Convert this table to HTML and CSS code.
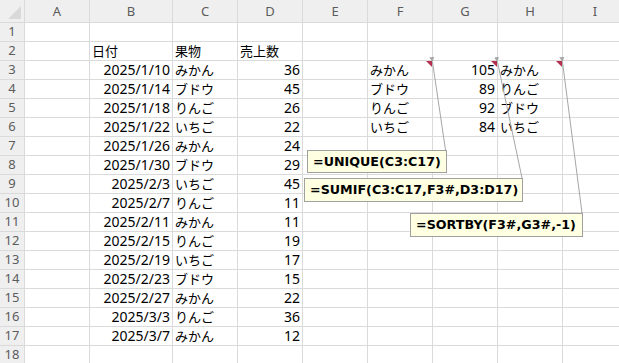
FILE: index.html
```html
<!DOCTYPE html>
<html lang="ja">
<head>
  <meta charset="UTF-8" />
  <meta name="viewport" content="width=device-width, initial-scale=1" />
  <title>果物の売上集計</title>
  <link rel="stylesheet" href="styles.css">
</head>
<body>
  <div class="book">
    <div class="sheet" id="sheet">
      <!-- Cells are built by the script below -->
    </div>

    <!-- Leader lines from the note markers to their notes -->
    <svg class="leaders" width="619" height="363">
      <defs>
        <marker id="tip" markerWidth="5" markerHeight="5" refX="0" refY="2.5" orient="auto-start-reverse" markerUnits="userSpaceOnUse">
          <path d="M0,2.5 L5,0 L5,5 z" fill="#a6a6a6" />
        </marker>
      </defs>
      <line x1="432.5" y1="62" x2="445.5" y2="150" marker-start="url(#tip)" />
      <line x1="497.5" y1="62" x2="522" y2="178" marker-start="url(#tip)" />
      <line x1="562.5" y1="62" x2="582" y2="213" marker-start="url(#tip)" />
    </svg>

    <div class="note note-unique">=UNIQUE(C3:C17)</div>
    <div class="note note-sumif">=SUMIF(C3:C17,F3#,D3:D17)</div>
    <div class="note note-sortby">=SORTBY(F3#,G3#,-1)</div>
  </div>

  <script>
    const cols = ['A', 'B', 'C', 'D', 'E', 'F', 'G', 'H', 'I'];

    const sales = [
      ['2025/1/10', 'みかん', 36],
      ['2025/1/14', 'ブドウ', 45],
      ['2025/1/18', 'りんご', 26],
      ['2025/1/22', 'いちご', 22],
      ['2025/1/26', 'みかん', 24],
      ['2025/1/30', 'ブドウ', 29],
      ['2025/2/3', 'いちご', 45],
      ['2025/2/7', 'りんご', 11],
      ['2025/2/11', 'みかん', 11],
      ['2025/2/15', 'りんご', 19],
      ['2025/2/19', 'いちご', 17],
      ['2025/2/23', 'ブドウ', 15],
      ['2025/2/27', 'みかん', 22],
      ['2025/3/3', 'りんご', 36],
      ['2025/3/7', 'みかん', 12]
    ];

    // Same results as the three spill formulas
    const fruits = [...new Set(sales.map(r => r[1]))];
    const totals = fruits.map(f => sales.filter(r => r[1] === f).reduce((sum, r) => sum + r[2], 0));
    const ranked = fruits.map((f, i) => [f, totals[i]]).sort((a, b) => b[1] - a[1]).map(p => p[0]);

    const cells = { B2: '日付', C2: '果物', D2: '売上数' };
    sales.forEach((r, i) => {
      const row = i + 3;
      cells['B' + row] = r[0];
      cells['C' + row] = r[1];
      cells['D' + row] = r[2];
    });
    fruits.forEach((f, i) => {
      cells['F' + (i + 3)] = f;
      cells['G' + (i + 3)] = totals[i];
      cells['H' + (i + 3)] = ranked[i];
    });

    const notes = ['F3', 'G3', 'H3'];
    const sheet = document.getElementById('sheet');

    function add(cls, text) {
      const div = document.createElement('div');
      div.className = cls;
      if (text !== undefined) div.textContent = text;
      sheet.appendChild(div);
    }

    add('corner');
    cols.forEach(c => add('col-head', c));

    for (let r = 1; r <= 18; r++) {
      add('row-head', r);
      cols.forEach(c => {
        const ref = c + r;
        const value = cells[ref];
        let cls = 'cell';
        if (typeof value === 'number' || /^\d/.test(value)) cls += ' num';
        else if (value) cls += ' ja';
        if (notes.includes(ref)) cls += ' has-note';
        add(cls, value);
      });
    }
  </script>
</body>
</html>
```

FILE: styles.css
```css
body { margin: 0; overflow: hidden; background: #fff; font-family: "Noto Sans", "Noto Sans CJK JP", sans-serif; }
.book { position: relative; width: 619px; height: 363px; overflow: hidden; }

.sheet { display: grid; grid-template-columns: 25px 65px 83px repeat(7, 65px); grid-template-rows: 23px; grid-auto-rows: 19px; }
.sheet > div { box-sizing: border-box; border-right: 1px solid #dadada; border-bottom: 1px solid #dadada; white-space: nowrap; overflow: hidden; }

.corner, .col-head, .row-head { background: #efefef; color: #5c5c5c; font-size: 13px; text-align: center; }
.corner { position: relative; border-right-color: #d4d4d4; border-bottom-color: #a9a9a9; }
.corner::after { content: ''; position: absolute; right: 3px; bottom: 3px; border-left: 13px solid transparent; border-bottom: 13px solid #d9d9d9; }
.col-head { line-height: 22px; border-right-color: #d4d4d4; border-bottom-color: #a9a9a9; }
.row-head { line-height: 16px; border-right-color: #a9a9a9; border-bottom-color: #d4d4d4; }

.cell { font-size: 14px; line-height: 18px; padding: 0 2px; color: #000; }
.cell.num { text-align: right; }
.cell.ja { font-family: "Noto Sans CJK JP", sans-serif; font-size: 13px; }
.cell.has-note { position: relative; }
.cell.has-note::after { content: ''; position: absolute; top: 0; right: 0; border-top: 6px solid #b4304e; border-left: 6px solid transparent; }

.leaders { position: absolute; top: 0; left: 0; pointer-events: none; }
.leaders line { stroke: #a6a6a6; stroke-width: 1; }

.note { position: absolute; box-sizing: border-box; background: #ffffe1; border: 1px solid #a0a0a0; color: #000; font: bold 12.7px "DejaVu Sans", sans-serif; line-height: 21px; padding: 0 5px; white-space: nowrap; }
.note-unique { left: 307px; top: 150px; width: 140px; height: 23px; }
.note-sumif { left: 304px; top: 178px; width: 219px; height: 24px; line-height: 22px; }
.note-sortby { left: 410px; top: 213px; width: 173px; height: 24px; line-height: 22px; }
```
